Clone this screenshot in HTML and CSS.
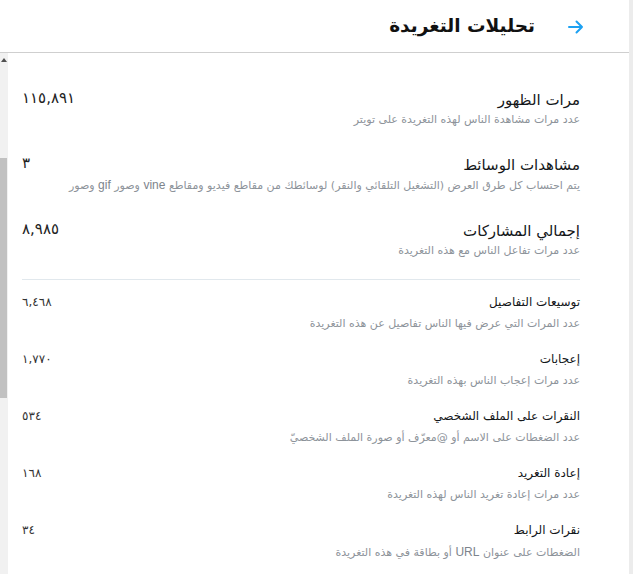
FILE: index.html
```html
<!DOCTYPE html>
<html lang="ar" dir="rtl">
<head>
<meta charset="utf-8">
<title>تحليلات التغريدة</title>
<link rel="stylesheet" href="styles.css">
</head>
<body>
<div class="page">
  <div class="edge"></div>
  <div class="main">
    <header class="top">
      <span class="back">
        <svg width="18" height="16" viewBox="0 0 18 16"><path d="M2 8H15M9.5 2.5L15 8L9.5 13.5" fill="none" stroke="#1da1f2" stroke-width="2" stroke-linecap="round" stroke-linejoin="round"/></svg>
      </span>
      <h1 class="title">تحليلات التغريدة</h1>
    </header>
    <div class="body">
      <section class="content">
        <div class="row big">
          <div class="text">
            <div class="label">مرات الظهور</div>
            <div class="desc">عدد مرات مشاهدة الناس لهذه التغريدة على تويتر</div>
          </div>
          <div class="num"><span class="digits">١١٥,٨٩١</span></div>
        </div>
        <div class="row big">
          <div class="text">
            <div class="label">مشاهدات الوسائط</div>
            <div class="desc">يتم احتساب كل طرق العرض (التشغيل التلقائي والنقر) لوسائطك من مقاطع فيديو ومقاطع <span class="latin">vine</span> وصور <span class="latin">gif</span> وصور</div>
          </div>
          <div class="num"><span class="digits">٣</span></div>
        </div>
        <div class="row big last">
          <div class="text">
            <div class="label">إجمالي المشاركات</div>
            <div class="desc">عدد مرات تفاعل الناس مع هذه التغريدة</div>
          </div>
          <div class="num"><span class="digits">٨,٩٨٥</span></div>
        </div>
        <hr class="divider">
        <div class="row small">
          <div class="text">
            <div class="label">توسيعات التفاصيل</div>
            <div class="desc">عدد المرات التي عرض فيها الناس تفاصيل عن هذه التغريدة</div>
          </div>
          <div class="num"><span class="digits">٦,٤٦٨</span></div>
        </div>
        <div class="row small">
          <div class="text">
            <div class="label">إعجابات</div>
            <div class="desc">عدد مرات إعجاب الناس بهذه التغريدة</div>
          </div>
          <div class="num"><span class="digits">١,٧٧٠</span></div>
        </div>
        <div class="row small">
          <div class="text">
            <div class="label">النقرات على الملف الشخصي</div>
            <div class="desc">عدد الضغطات على الاسم أو @معرّف أو صورة الملف الشخصيّ</div>
          </div>
          <div class="num"><span class="digits">٥٣٤</span></div>
        </div>
        <div class="row small">
          <div class="text">
            <div class="label">إعادة التغريد</div>
            <div class="desc">عدد مرات إعادة تغريد الناس لهذه التغريدة</div>
          </div>
          <div class="num"><span class="digits">١٦٨</span></div>
        </div>
        <div class="row small">
          <div class="text">
            <div class="label">نقرات الرابط</div>
            <div class="desc">الضغطات على عنوان <span class="latin">URL</span> أو بطاقة في هذه التغريدة</div>
          </div>
          <div class="num"><span class="digits">٣٤</span></div>
        </div>
      </section>
      <div class="scrollbar">
        <div class="sb-arrow"></div>
        <div class="sb-thumb"></div>
      </div>
    </div>
  </div>
</div>
</body>
</html>
```

FILE: styles.css
```css
* { box-sizing: border-box; }
html, body { margin: 0; padding: 0; background: #fff; }
body {
  font-family: "DejaVu Sans", "Liberation Sans", sans-serif;
  color: #14171a;
  width: 633px;
  height: 574px;
  overflow: hidden;
}
.page {
  display: flex;
  flex-direction: row;
  height: 574px;
}
.edge {
  width: 4px;
  flex: none;
  background: #ececec;
}
.main {
  width: 629px;
  flex: none;
  display: flex;
  flex-direction: column;
}
.top {
  height: 53px;
  flex: none;
  display: flex;
  align-items: center;
  padding-right: 44px;
  border-bottom: 1px solid #cfcfcf;
}
.back {
  display: flex;
  width: 18px;
  height: 16px;
  margin-top: 2px;
}
.title {
  margin: 0 32px 0 0;
  font-size: 18.5px;
  font-weight: bold;
  color: #111;
  line-height: 26px;
}
.body {
  flex: 1;
  display: flex;
  flex-direction: row;
  min-height: 0;
}
.content {
  flex: 1;
  padding: 37px 49px 0 14px;
}
.scrollbar {
  width: 8px;
  flex: none;
  background: #f1f1f1;
  position: relative;
}
.sb-arrow {
  position: absolute;
  top: 5px;
  left: 1px;
  width: 0;
  height: 0;
  border-left: 3px solid transparent;
  border-right: 3px solid transparent;
  border-bottom: 4px solid #505050;
}
.sb-thumb {
  position: absolute;
  top: 105px;
  left: 0;
  width: 7px;
  height: 240px;
  background: #c1c1c1;
}
.row {
  display: flex;
  flex-direction: row;
  align-items: flex-start;
}
.text { flex: 1; }
.num {
  flex: none;
  color: #222;
  direction: ltr;
}
.digits {
  display: inline-block;
  direction: ltr;
  unicode-bidi: isolate;
}
.latin {
  font-family: "Liberation Sans", Arial, sans-serif;
  font-size: 12px;
  color: #7d848c;
}
.big { margin-bottom: 26px; }
.big.last { margin-bottom: 0; }
.big .label {
  font-size: 15px;
  line-height: 20px;
}
.big .desc {
  font-size: 11px;
  line-height: 18px;
  margin-top: 1px;
  color: #8d939a;
}
.big .num {
  font-size: 15px;
  line-height: 16px;
}
.big .digits { letter-spacing: 2.5px; }
.divider {
  border: 0;
  border-top: 1px solid #e1e8ed;
  margin: 19px 0 13px 0;
  height: 0;
}
.small { margin-bottom: 17px; }
.small .label {
  font-size: 12px;
  line-height: 18px;
}
.small .desc {
  font-size: 11px;
  line-height: 18px;
  margin-top: 4px;
  color: #8d939a;
}
.small .num {
  font-size: 12px;
  line-height: 18px;
  color: #333;
}
.small .digits { letter-spacing: 2px; }
```
